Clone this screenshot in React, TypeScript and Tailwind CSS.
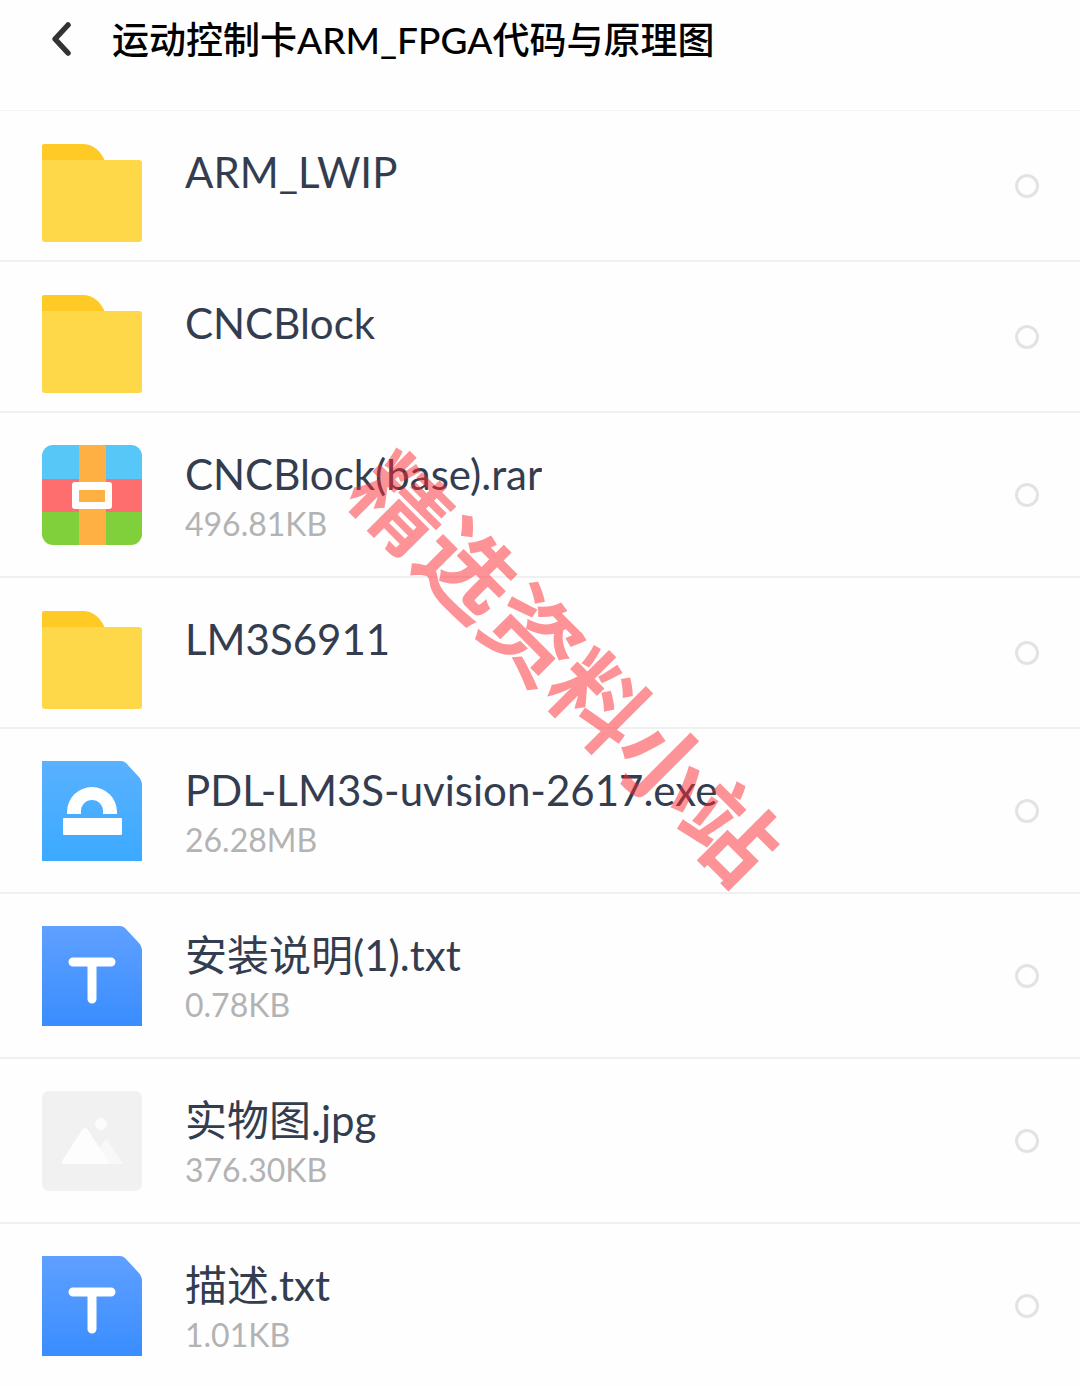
import { useState } from "react";

type Kind = "folder" | "rar" | "exe" | "txt" | "image";

type Entry = { name: string; kind: Kind; size?: string };

const entries: Entry[] = [
  { name: "ARM_LWIP", kind: "folder" },
  { name: "CNCBlock", kind: "folder" },
  { name: "CNCBlock(base).rar", kind: "rar", size: "496.81KB" },
  { name: "LM3S6911", kind: "folder" },
  { name: "PDL-LM3S-uvision-2617.exe", kind: "exe", size: "26.28MB" },
  { name: "安装说明(1).txt", kind: "txt", size: "0.78KB" },
  { name: "实物图.jpg", kind: "image", size: "376.30KB" },
  { name: "描述.txt", kind: "txt", size: "1.01KB" },
];

function FolderIcon() {
  return (
    <>
      <path d="M0 3Q0 1 2 1H40C51 1 58 7 63 18V30H0Z" fill="#ffc926" />
      <path d="M0 17H97Q100 17 100 20V96Q100 99 97 99H3Q0 99 0 96Z" fill="#ffd84a" />
    </>
  );
}

function RarIcon() {
  return (
    <>
      <clipPath id="rar-clip">
        <rect width="100" height="100" rx="11" />
      </clipPath>
      <g clipPath="url(#rar-clip)">
        <rect width="100" height="34" fill="#56c7f7" />
        <rect y="34" width="100" height="34" fill="#ff6e6e" />
        <rect y="67" width="100" height="33" fill="#80d03c" />
        <rect x="37" width="27" height="100" fill="#ffb042" />
      </g>
      <rect x="30" y="37" width="40" height="27" rx="3" fill="#fff" />
      <rect x="37" y="45" width="26" height="12" fill="#ffb042" />
    </>
  );
}

function ExeIcon() {
  return (
    <>
      <linearGradient id="exe-fill" x1="0" y1="0" x2="0" y2="1">
        <stop stopColor="#5ab1ff" />
        <stop offset="1" stopColor="#3baaff" />
      </linearGradient>
      <path d="M0 0H79Q82 0 84 2L96 15Q100 19 100 24V100H0Z" fill="url(#exe-fill)" />
      <path d="M25 53V51A25 25 0 0 1 75 51V53H61V50A11 11 0 0 0 39 50V53Z" fill="#fff" />
      <rect x="21" y="57" width="59" height="17" rx="1" fill="#fff" />
    </>
  );
}

function TxtIcon() {
  return (
    <>
      <linearGradient id="txt-fill" x1="0" y1="0" x2="0" y2="1">
        <stop stopColor="#5fa0ff" />
        <stop offset="1" stopColor="#398dff" />
      </linearGradient>
      <path d="M0 0H78Q81 0 83 2L96 16Q100 20 100 25V100H0Z" fill="url(#txt-fill)" />
      <path d="M31 36H69M50 36V73" stroke="#fff" strokeWidth="9" strokeLinecap="round" />
    </>
  );
}

function ImageIcon() {
  return (
    <>
      <rect width="100" height="100" rx="7" fill="#f1f1f1" />
      <circle cx="59" cy="33" r="6" fill="#fcfcfc" />
      <path d="M62 50Q64 47 66 50L81 73H48Z" fill="#f8f8f8" />
      <path d="M40 39Q43 35 46 39L68 73H22Q19 73 20 70Z" fill="#fdfdfd" />
    </>
  );
}

const icons = {
  folder: FolderIcon,
  rar: RarIcon,
  exe: ExeIcon,
  txt: TxtIcon,
  image: ImageIcon,
};

function FileRow({ entry, checked, onToggle }: { entry: Entry; checked: boolean; onToggle: () => void }) {
  const Icon = icons[entry.kind];
  return (
    <li className="border-b-2 border-[#f0f0f0]">
      <label className="flex items-center pr-[41px] pl-[42px]">
        <span className={`flex min-w-0 flex-1 gap-[43px] pt-8 ${entry.size ? "pb-[31px]" : "pb-[17px]"}`}>
          <svg viewBox="0 0 100 100" fill="none" className="size-[100px] shrink-0" aria-hidden="true">
            <Icon />
          </svg>
          <span className="flex min-w-0 flex-col">
            <span className="truncate text-[42px] leading-[58px] text-[#333d4f]">{entry.name}</span>
            {entry.size && <span className="text-[32px] leading-[42px] text-[#b3b3b3]">{entry.size}</span>}
          </span>
        </span>
        <input
          type="checkbox"
          checked={checked}
          onChange={onToggle}
          aria-label={entry.name}
          className="size-6 shrink-0 appearance-none rounded-full border-3 border-[#e3e3e3] checked:border-[#398dff] checked:bg-[#398dff]"
        />
      </label>
    </li>
  );
}

export default function App() {
  const [selected, setSelected] = useState<string[]>([]);

  const toggle = (name: string) =>
    setSelected((prev) => (prev.includes(name) ? prev.filter((n) => n !== name) : [...prev, name]));

  return (
    <div className="relative min-h-screen overflow-hidden bg-[#fefefe] font-[Lato,'Noto_Sans_CJK_SC',sans-serif]">
      <header className="flex items-start gap-9 border-b border-[#f3f3f3] pt-4 pb-[46px] pl-12">
        <button type="button" aria-label="返回" className="flex h-12 w-7 items-center justify-center">
          <svg viewBox="0 0 28 48" fill="none" className="h-12 w-7">
            <path d="M20 9L7 23L20 37" stroke="#333" strokeWidth="5.5" strokeLinecap="round" strokeLinejoin="round" />
          </svg>
        </button>
        <h1 className="text-[37px] leading-[48px] font-medium text-black">运动控制卡ARM_FPGA代码与原理图</h1>
      </header>

      <ul>
        {entries.map((entry) => (
          <FileRow
            key={entry.name}
            entry={entry}
            checked={selected.includes(entry.name)}
            onToggle={() => toggle(entry.name)}
          />
        ))}
      </ul>

      {/* watermark */}
      <div className="pointer-events-none absolute top-[668px] left-[566px] -translate-x-1/2 -translate-y-1/2 rotate-45 text-[93px] leading-none font-bold whitespace-nowrap text-[#fc282e]/50">
        精选资料小站
      </div>
    </div>
  );
}
